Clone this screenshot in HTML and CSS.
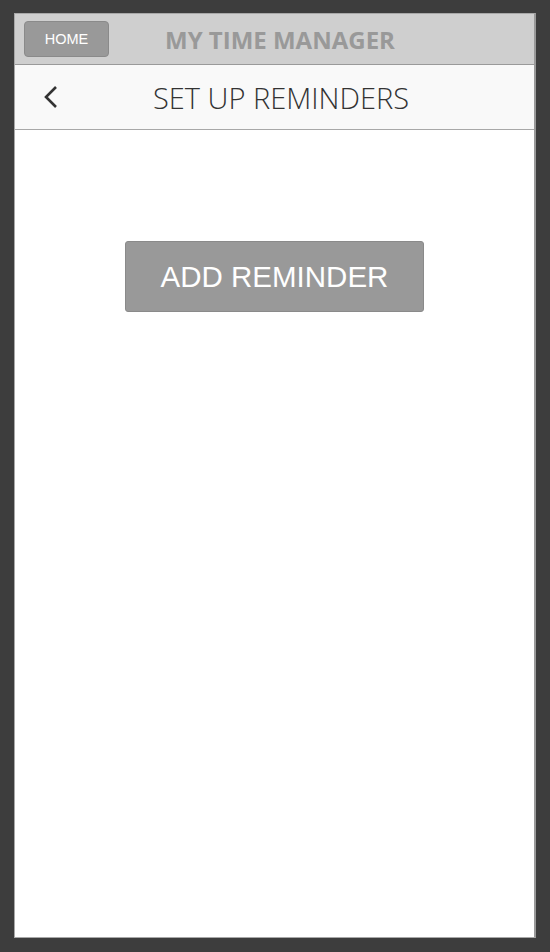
FILE: index.html
```html
<!DOCTYPE html>
<html>
<head>
<meta charset="utf-8">
<link rel="stylesheet" href="styles.css">
</head>
<body>
<div class="screen">
  <header class="topbar">
    <button class="home-btn">HOME</button>
    <div class="app-title">MY TIME MANAGER</div>
  </header>
  <nav class="navbar">
    <svg class="back" width="16" height="24" viewBox="0 0 16 24"><path d="M13 2 L3 12 L13 22" fill="none" stroke="#333" stroke-width="2.6"/></svg>
    <div class="page-title">SET UP REMINDERS</div>
  </nav>
  <main class="content">
    <button class="add-btn">ADD REMINDER</button>
  </main>
</div>
</body>
</html>
```
FILE: styles.css
```css
html, body {
  margin: 0;
  padding: 0;
}
body {
  background: #3d3d3d;
  width: 550px;
  height: 952px;
  box-sizing: border-box;
  padding: 13px 14px 14px 14px;
}
.screen {
  width: 522px;
  height: 925px;
  box-sizing: border-box;
  background: #ffffff;
  border: 1px solid #a8a8a8;
  border-right: 2px solid #999;
  display: flex;
  flex-direction: column;
}
.topbar {
  height: 51px;
  background: #cfcfcf;
  border-bottom: 1px solid #9a9a9a;
  display: flex;
  align-items: center;
  padding-left: 9px;
  box-sizing: border-box;
}
.home-btn {
  width: 85px;
  height: 36px;
  background: #999999;
  border: 1px solid #8a8a8a;
  border-radius: 4px;
  color: #ffffff;
  font-family: "Liberation Sans", Arial, sans-serif;
  font-size: 14.5px;
  padding: 0;
  margin: 0;
}
.app-title {
  margin-left: 56px;
  font-family: "Open Sans", sans-serif;
  font-weight: 700;
  font-size: 24px;
  color: #999999;
}
.navbar {
  height: 65px;
  background: #f9f9f9;
  border-bottom: 1px solid #a8a8a8;
  box-sizing: border-box;
  display: flex;
  align-items: center;
  padding-left: 28px;
}
.back {
  display: block;
}
.page-title {
  margin-left: 94px;
  font-family: "Open Sans", sans-serif;
  font-weight: 300;
  font-size: 29px;
  color: #333333;
}
.content {
  flex: 1;
  display: flex;
  flex-direction: column;
  align-items: center;
  padding-top: 111px;
}
.add-btn {
  width: 299px;
  height: 71px;
  background: #999999;
  border: 1px solid #8a8a8a;
  border-radius: 3px;
  color: #ffffff;
  font-family: "Liberation Sans", Arial, sans-serif;
  font-size: 29.5px;
  padding: 0;
  margin: 0;
}
```
